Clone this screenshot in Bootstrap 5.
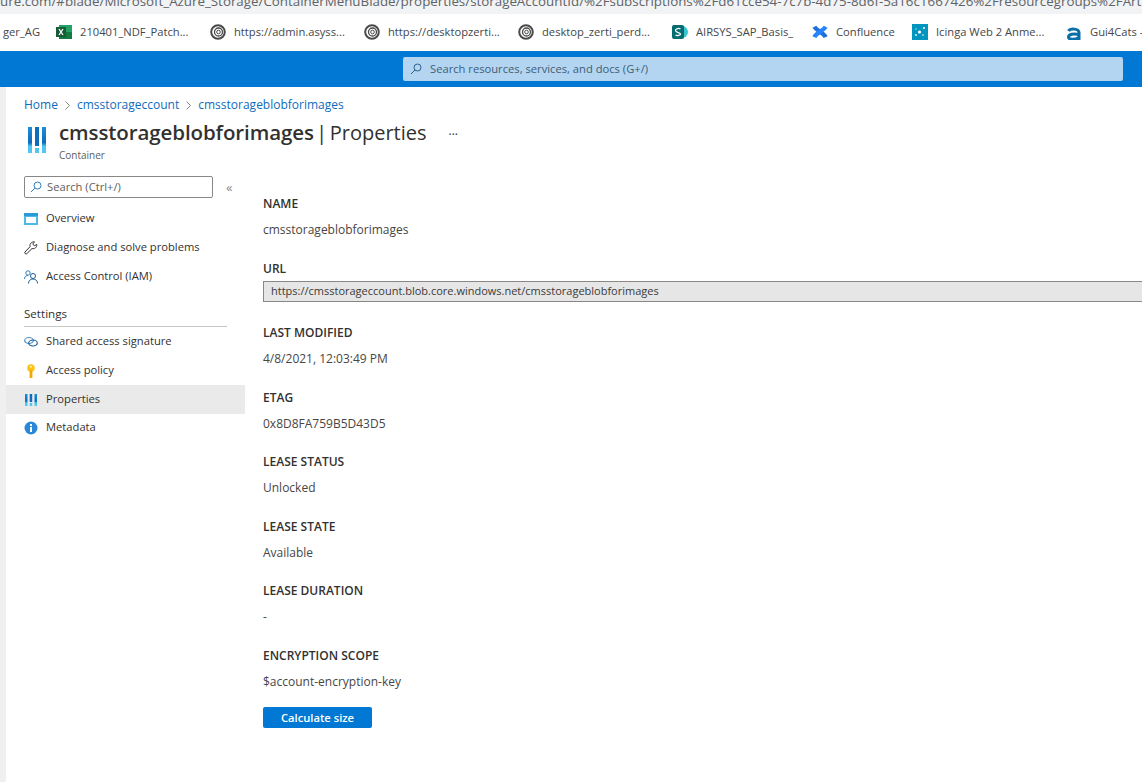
<!DOCTYPE html>
<html lang="en">
<head>
  <meta charset="UTF-8">
  <title>cmsstorageblobforimages | Properties</title>
  <link href="https://cdn.jsdelivr.net/npm/bootstrap@5.3.3/dist/css/bootstrap.min.css" rel="stylesheet">
  <style>
    html, body { height: 100%; }
    body { font-family: "Open Sans", "Noto Sans", sans-serif; font-size: 11.2px; color: #323130; overflow: hidden; background: #fff; }
    .url-strip { height: 14px; background: #f1f3f4; color: #5f6368; font-size: 13.35px; line-height: 14px; white-space: nowrap; overflow: hidden; }
    .url-strip span { display: block; margin-top: -6px; }
    .marks { height: 37px; white-space: nowrap; overflow: hidden; color: #44474a; font-size: 11.2px; }
    .mark-item { flex: none; }
    .mark-first { width: 53px; margin-left: 3px; }
    .top-blue { height: 36px; background: #0078d4; padding-left: 403px; padding-right: 19px; }
    .top-search { height: 24px; background: #b3d5f1; border-radius: 2px; color: #3f5d75; padding-left: 7px; font-size: 11.2px; gap: 8px; }
    .page-body { height: 695px; border-left: 6px solid #f0f0f0; }
    .crumbs { padding: 10px 0 0 18px; height: 33px; gap: 6px; color: #0f6cbd; font-size: 12px; line-height: 16px; }
    .crumbs svg { color: #8a8886; }
    .head-row { padding-left: 21px; height: 45px; }
    .head-title { font-size: 20.5px; line-height: 24px; color: #323130; white-space: nowrap; word-spacing: -3px; }
    .head-title strong { font-weight: 600; letter-spacing: -.1px; }
    .head-title span { font-size: 20px; }
    .head-sub { font-size: 10px; color: #605e5c; line-height: 14px; margin-top: 3px; }
    .head-more { margin-left: 22px; margin-top: 2px; font-size: 12px; line-height: 26px; }
    .side-col { width: 239px; flex: none; padding-top: 11px; }
    .side-search { width: 189px; height: 22px; margin-left: 18px; border: 1px solid #8a8886; border-radius: 2px; padding-left: 5px; gap: 5px; color: #605e5c; }
    .collapse-mark { margin-left: 13px; color: #8a8886; font-size: 13px; line-height: 1; }
    .side-link { height: 29px; padding-left: 18px; gap: 8px; color: #323130; text-decoration: none; }
    .side-link.on { background: #eaeaea; }
    .side-first { margin-top: 6px; }
    .side-last { margin-top: -1px; }
    .side-group { margin: 14px 18px 0 18px; height: 22px; border-bottom: 1px solid #c8c6c4; font-size: 11.6px; line-height: 17px; }
    .prop-col { padding-top: 30px; padding-left: 18px; min-width: 0; flex: 1; overflow: hidden; }
    .prop-block { height: 64.5px; }
    .prop-name { font-weight: 600; font-size: 12px; line-height: 16px; height: 27px; padding-top: 1px; color: #323130; }
    .prop-val { font-size: 12px; line-height: 16px; color: #484644; }
    .url-box { width: 1000px; height: 21px; background: #e6e6e6; border: 1px solid #8a8886; padding-left: 7px; font-size: 11px; line-height: 18px; margin-top: -6px; color: #3b3a39; }
    .calc-btn { width: 109px; height: 21px; background: #0078d4; color: #fff; font-size: 11.2px; font-weight: 600; border: 0; border-radius: 2px; padding: 0; line-height: 21px; margin-top: -5px; }
    .calc-btn:hover { background: #106ebe; color: #fff; }
  </style>
</head>
<body>
  <div class="url-strip"><span>ure.com/#blade/Microsoft_Azure_Storage/ContainerMenuBlade/properties/storageAccountId/%2Fsubscriptions%2Fd61cce54-7c7b-4d75-8d6f-5a16c1667426%2Fresourcegroups%2FArti</span></div>

  <div class="marks d-flex align-items-center">
    <span class="mark-item mark-first">ger_AG</span>
    <span class="mark-item d-flex align-items-center gap-2" style="width:154px">
      <svg width="16" height="16" viewBox="0 0 16 16"><rect x="3" y="1" width="13" height="14" fill="#21a366"/><rect x="3" y="8" width="13" height="7" fill="#107c41"/><rect y="3" width="10" height="10" fill="#185c37"/><path d="M3 5l4 6M7 5l-4 6" stroke="#fff" stroke-width="1.3"/></svg>
      210401_NDF_Patch...
    </span>
    <span class="mark-item d-flex align-items-center gap-2" style="width:154px">
      <svg width="16" height="16" viewBox="0 0 16 16" fill="none" stroke="#4a4a4a"><circle cx="8" cy="8" r="6.800" stroke-width="2"/><circle cx="8.500" cy="8" r="4" stroke-width="1.300"/><circle cx="8.500" cy="8" r="1.800"/></svg>
      https://admin.asyss...
    </span>
    <span class="mark-item d-flex align-items-center gap-2" style="width:154px">
      <svg width="16" height="16" viewBox="0 0 16 16" fill="none" stroke="#4a4a4a"><circle cx="8" cy="8" r="6.800" stroke-width="2"/><circle cx="8.500" cy="8" r="4" stroke-width="1.300"/><circle cx="8.500" cy="8" r="1.800"/></svg>
      https://desktopzerti...
    </span>
    <span class="mark-item d-flex align-items-center gap-2" style="width:154px">
      <svg width="16" height="16" viewBox="0 0 16 16" fill="none" stroke="#4a4a4a"><circle cx="8" cy="8" r="6.800" stroke-width="2"/><circle cx="8.500" cy="8" r="4" stroke-width="1.300"/><circle cx="8.500" cy="8" r="1.800"/></svg>
      desktop_zerti_perd...
    </span>
    <span class="mark-item d-flex align-items-center gap-2" style="width:140px">
      <svg width="16" height="16" viewBox="0 0 16 16"><circle cx="10" cy="8" r="6" fill="#37c6d0"/><rect y="1" width="12" height="14" rx="2" fill="#036c70"/><path d="M8.500 5C7 4 3.500 4.500 3.500 6.500S8.500 8.500 8.500 10 5 12 3.500 11" fill="none" stroke="#fff" stroke-width="1.300"/></svg>
      AIRSYS_SAP_Basis_
    </span>
    <span class="mark-item d-flex align-items-center gap-2" style="width:100px">
      <svg width="16" height="16" viewBox="0 0 17 16" fill="none" stroke-width="4.600"><path d="M2.500 2.500C5 7 12 8 14.500 13.500" stroke="#1f6fdc"/><path d="M14.500 2.500C12 7 5 8 2.500 13.500" stroke="#2684ff"/></svg>
      Confluence
    </span>
    <span class="mark-item d-flex align-items-center gap-2" style="width:154px">
      <svg width="16" height="16" viewBox="0 0 16 16"><rect width="16" height="16" fill="#0095bf"/><circle cx="7.500" cy="8" r="1.600" fill="#fff"/><circle cx="12" cy="4" r="1" fill="#fff"/><circle cx="4" cy="11" r="1" fill="#cfeef7"/><circle cx="11" cy="11" r=".8" fill="#fff"/><circle cx="4" cy="5" r=".7" fill="#cfeef7"/></svg>
      Icinga Web 2 Anme...
    </span>
    <span class="mark-item d-flex align-items-center gap-2">
      <svg width="16" height="16" viewBox="0 0 16 16" fill="none" stroke="#0a6fa8" stroke-width="3"><path d="M2.500 7C4 4.500 12.500 4 13 8.500V16"/><path d="M13 10.500C8 9.500 2.500 10 2.500 13s6.500 3 10.500 .5"/></svg>
      Gui4Cats -
    </span>
  </div>

  <div class="top-blue d-flex align-items-center">
    <div class="top-search d-flex align-items-center w-100">
      <svg width="12" height="12" viewBox="0 0 12 12" fill="none" stroke="#2f5f85"><circle cx="7.500" cy="4.500" r="3.500"/><path d="M5 7 1 11"/></svg>
      <span>Search resources, services, and docs (G+/)</span>
    </div>
  </div>

  <div class="page-body">
    <nav class="crumbs d-flex align-items-start">
      <span>Home</span>
      <svg class="mt-1" width="7" height="9" viewBox="0 0 7 9" fill="none" stroke="currentColor"><path d="m1.500.5 4 4-4 4"/></svg>
      <span>cmsstorageccount</span>
      <svg class="mt-1" width="7" height="9" viewBox="0 0 7 9" fill="none" stroke="currentColor"><path d="m1.500.5 4 4-4 4"/></svg>
      <span>cmsstorageblobforimages</span>
    </nav>

    <div class="head-row d-flex align-items-start">
      <svg class="mt-1" width="20" height="30" viewBox="0 0 20 30" style="flex:none">
        <defs><linearGradient id="blueBar" x1="0" y1="0" x2="0" y2="1"><stop offset="0" stop-color="#1a8fd8"/><stop offset=".6" stop-color="#0f6cbd"/><stop offset=".75" stop-color="#50c7f0"/><stop offset="1" stop-color="#50c7f0"/></linearGradient></defs>
        <rect x="1" y="3" width="4" height="26" fill="url(#blueBar)"/>
        <rect x="8" y="3" width="4" height="19" fill="#0f6cbd"/><rect x="8" y="24" width="4" height="5" fill="#50c7f0"/>
        <rect x="15" y="3" width="4" height="26" fill="url(#blueBar)"/>
      </svg>
      <div class="ms-2 ps-1">
        <div class="head-title"><strong>cmsstorageblobforimages</strong> | <span>Properties</span></div>
        <div class="head-sub">Container</div>
      </div>
      <div class="head-more">&#183;&#183;&#183;</div>
    </div>

    <div class="d-flex">
      <aside class="side-col">
        <div class="d-flex align-items-center">
          <div class="side-search d-flex align-items-center">
            <svg width="12" height="12" viewBox="0 0 12 12" fill="none" stroke="#2f7fbd"><circle cx="7.500" cy="4.500" r="3.500"/><path d="M5 7 1 11"/></svg>
            <span>Search (Ctrl+/)</span>
          </div>
          <span class="collapse-mark">&#171;</span>
        </div>

        <a class="side-link side-first d-flex align-items-center" href="#">
          <svg width="14" height="12" viewBox="0 0 14 12"><rect width="14" height="12" fill="#50b8e6"/><rect width="14" height="3" fill="#2a9ad8"/><rect x="2" y="4" width="10" height="6" fill="#fff"/></svg>
          <span>Overview</span>
        </a>
        <a class="side-link d-flex align-items-center" href="#">
          <svg width="14" height="15" viewBox="0 0 14 14" fill="none" stroke="#323130" stroke-width="1"><path d="M1 11.500 6 6.200C5.400 3.500 7.500 1 10.500 1.300L8.800 3.500l1.500 1.800 2.500-1.300C13 7 10.500 8.800 8 8L2.800 13.200c-1 .8-2.800-.6-1.800-1.700Z"/></svg>
          <span>Diagnose and solve problems</span>
        </a>
        <a class="side-link d-flex align-items-center" href="#">
          <svg width="14" height="14" viewBox="0 0 14 14" fill="none" stroke="#2f7fbd"><circle cx="4" cy="3" r="2.200"/><path d="M.5 9c0-2.500 1.500-3.500 3.500-3.500"/><circle cx="9" cy="6" r="2.500" stroke="#1b5f95"/><path d="M4.500 13.500c0-3 2-4.500 4.500-4.500s4.500 1.500 4.500 4.500" stroke="#1b5f95"/></svg>
          <span>Access Control (IAM)</span>
        </a>

        <div class="side-group">Settings</div>

        <a class="side-link d-flex align-items-center" href="#">
          <svg width="14" height="12" viewBox="0 0 14 12" fill="none" stroke-width="1.200"><ellipse cx="5" cy="4.500" rx="4.300" ry="3" stroke="#4a90c8"/><ellipse cx="9" cy="7" rx="4.300" ry="3" stroke="#1d5f96"/></svg>
          <span>Shared access signature</span>
        </a>
        <a class="side-link d-flex align-items-center" href="#">
          <svg width="14" height="14" viewBox="0 0 14 14"><circle cx="7" cy="4" r="3.800" fill="#fcc419"/><rect x="5.600" y="6" width="2.800" height="8" fill="#f2a900"/><rect x="6" y="2" width="2" height="1.500" fill="#fff3bf"/></svg>
          <span>Access policy</span>
        </a>
        <a class="side-link on d-flex align-items-center" href="#">
          <svg width="14" height="14" viewBox="0 0 14 14"><rect x="1" y="1" width="2.500" height="12" fill="url(#blueBar)"/><rect x="5.700" y="1" width="2.500" height="8" fill="#0f6cbd"/><rect x="5.700" y="10" width="2.500" height="3" fill="#50c7f0"/><rect x="10.500" y="1" width="2.500" height="12" fill="url(#blueBar)"/></svg>
          <span>Properties</span>
        </a>
        <a class="side-link side-last d-flex align-items-center" href="#">
          <svg width="14" height="14" viewBox="0 0 14 14"><circle cx="7" cy="7" r="6.500" fill="#2b88d8"/><rect x="6" y="6" width="2" height="5" fill="#fff"/><rect x="6" y="3" width="2" height="2" fill="#fff"/></svg>
          <span>Metadata</span>
        </a>
      </aside>

      <main class="prop-col" id="props"></main>
    </div>
  </div>

  <script>
    var props = [
      ['NAME', 'cmsstorageblobforimages'],
      ['URL', 'https://cmsstorageccount.blob.core.windows.net/cmsstorageblobforimages', true],
      ['LAST MODIFIED', '4/8/2021, 12:03:49 PM'],
      ['ETAG', '0x8D8FA759B5D43D5'],
      ['LEASE STATUS', 'Unlocked'],
      ['LEASE STATE', 'Available'],
      ['LEASE DURATION', '-'],
      ['ENCRYPTION SCOPE', '$account-encryption-key']
    ];
    document.getElementById('props').innerHTML = props.map(function (p) {
      var cls = p[2] ? 'url-box' : 'prop-val';
      return '<div class="prop-block"><div class="prop-name">' + p[0] + '</div><div class="' + cls + '">' + p[1] + '</div></div>';
    }).join('') + '<button type="button" class="btn calc-btn">Calculate size</button>';
  </script>
  <script src="https://cdn.jsdelivr.net/npm/bootstrap@5.3.3/dist/js/bootstrap.bundle.min.js"></script>
</body>
</html>
